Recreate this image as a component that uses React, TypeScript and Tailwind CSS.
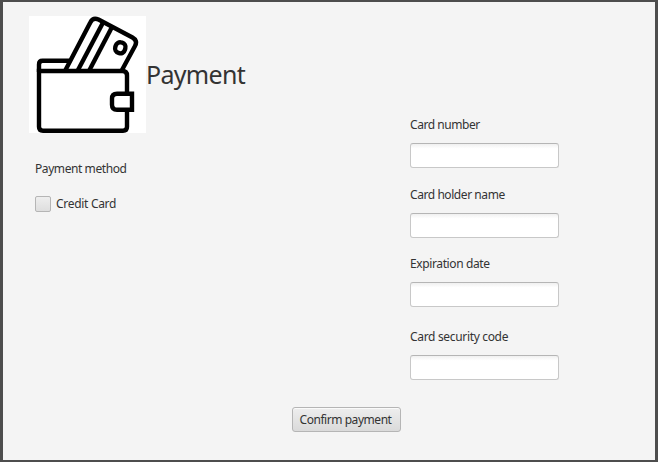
import React from "react";

function WalletIcon() {
  return (
    <svg className="block shrink-0 bg-white" width="117" height="117" viewBox="0 0 117 117" fill="none" stroke="#000" strokeWidth="4.4">
      <path d="M36.500 54 L61.300 6.500 Q64 1 69.500 3.500 L103.500 21.500 Q109 24.500 106 30 L93 54" />
      <path d="M73.800 7 L49 54" />
      <path d="M82.500 12 L60.500 54" />
      <rect x="86.300" y="26.400" width="10" height="10.800" rx="4.600" transform="rotate(16 91.3 31.800)" />
      <path d="M10 56 V48.500 Q10 44.800 13.500 44.800 H40" />
      <path d="M98 76 V59.500 Q98 55 93.500 55 H10 V110.800 Q10 114.800 14 114.800 H94 Q98 114.800 98 110.800 V95" />
      <path d="M103 77.700 H88 Q83 77.700 83 82.700 V88.800 Q83 93.800 88 93.800 H103 Z" />
    </svg>
  );
}

function Field({ label, tracking, className = "" }: { label: string; tracking: string; className?: string }) {
  return (
    <label className={`flex flex-col gap-2.5 ${className}`}>
      <span className={`h-4 whitespace-nowrap leading-4 ${tracking}`}>{label}</span>
      <input
        type="text"
        className="h-[25px] w-[149px] rounded-[3px] border border-[#c8c8c8] border-t-[#b5b5b5] bg-white bg-linear-to-b from-[#f0f0f0] to-white to-20% px-[7px] outline-none"
      />
    </label>
  );
}

export default function App() {
  return (
    <main className="flex h-[462px] w-[658px] flex-col overflow-hidden border-x-[3px] border-y-2 border-[#4d4d4d] bg-[#f4f4f4] font-['Noto_Sans','Open_Sans',sans-serif] text-[12px] text-[#333333]">
      <div className="flex pl-[26px] pt-[14px]">
        <section className="w-[381px]">
          <header className="flex items-center">
            <WalletIcon />
            <h1 className="whitespace-nowrap pb-px text-[25px] leading-8 tracking-[-0.69px]">Payment</h1>
          </header>
          <div className="pl-[6px] pt-7">
            <p className="h-4 leading-4 tracking-[-0.42px]">Payment method</p>
            <label className="mt-[19px] flex h-4 items-center gap-[5px] leading-4 tracking-[-0.3px]">
              <input
                type="checkbox"
                className="size-4 shrink-0 appearance-none rounded-[2px] border border-[#b5b5b5] bg-linear-to-b from-[#eeeeee] to-[#dedede]"
              />
              <span>Credit Card</span>
            </label>
          </div>
        </section>
        <form className="flex flex-col pt-[101px]">
          <Field label="Card number" tracking="tracking-[-0.45px]" />
          <Field label="Card holder name" tracking="tracking-[-0.43px]" className="mt-[19px]" />
          <Field label="Expiration date" tracking="tracking-[-0.38px]" className="mt-[18px]" />
          <Field label="Card security code" tracking="tracking-[-0.33px]" className="mt-[22px]" />
        </form>
      </div>
      <button className="ml-[289px] mt-[27px] h-[25px] w-[109px] whitespace-nowrap rounded-[3px] border border-[#b5b5b5] bg-linear-to-b from-[#eeeeee] to-[#dadada] pr-0.5 pt-px text-center leading-[22px] tracking-[-0.45px] shadow-[inset_0_1px_0_#fafafa]">
        Confirm payment
      </button>
    </main>
  );
}
